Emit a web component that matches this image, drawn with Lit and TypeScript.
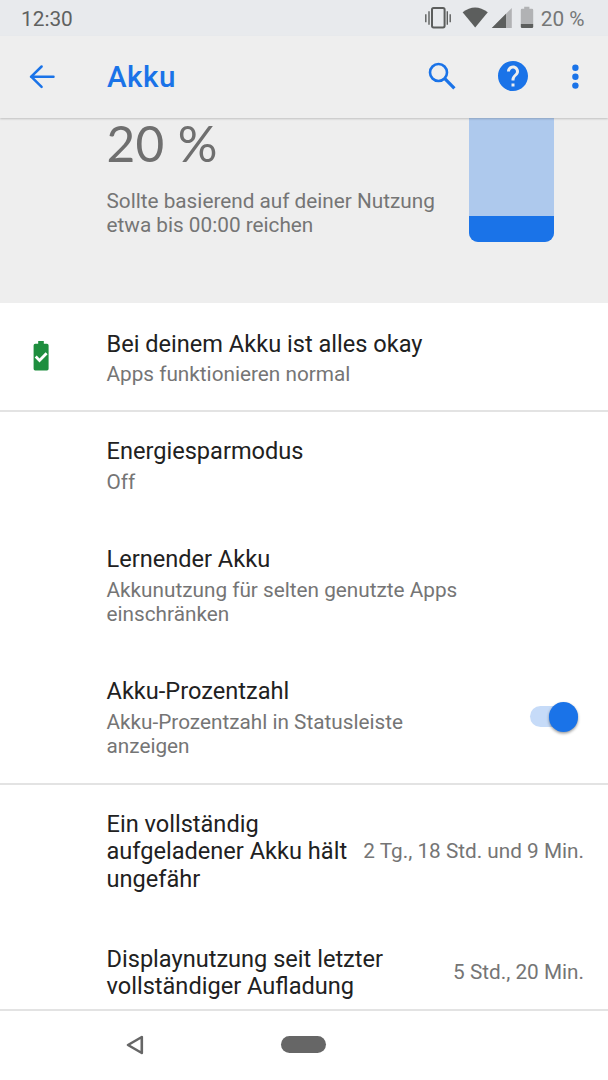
import { LitElement, html, svg, css, nothing } from "lit";
import { customElement, property } from "lit/decorators.js";

const title = css`
  .title {
    font-size: 23.58px;
    line-height: 27.6px;
    color: #212121;
    white-space: pre-line;
  }
  .summary {
    font-size: 20.76px;
    line-height: 24.2px;
    color: #757575;
    white-space: pre-line;
  }
`;

@customElement("status-bar")
class StatusBar extends LitElement {
  static styles = css`
    :host {
      display: flex;
      height: 35.5px;
      box-sizing: border-box;
      padding: 2px 23.5px 0 21px;
      align-items: center;
      justify-content: space-between;
      background: #e8eaed;
      color: #5f6160;
      font-size: 20.8px;
    }
    .icons {
      display: block;
      margin-top: -2px;
    }
    .right {
      display: flex;
      align-items: center;
      gap: 5px;
      color: #757777;
    }
  `;
  render() {
    return html`
      <span>12:30</span>
      <div class="right">
        <svg class="icons" width="112" height="36" viewBox="424 0 112 36">
          <g fill="none" stroke="#5c5e5d">
            <rect x="432" y="8" width="12.6" height="19.4" rx="1.6" stroke-width="2" />
            <path d="M425.8 14.2v8M450.2 14.2v8M429 11.2v13.6M447.3 11.2v13.6" stroke-width="1.4" />
          </g>
          <path d="M462.6 12.2Q475 2.6 487.8 12.2L475.2 27.6Z" fill="#5c5e5d" />
          <path d="M511.8 8v20H491.8Z" fill="#b1b2b4" />
          <path d="M506 13.8V28H491.8Z" fill="#5c5e5d" />
          <path d="M524.2 6.8h5.2v2h2.6q1.2 0 1.2 1.2v14h-12.4V10q0-1.2 1.2-1.2h2.2Z" fill="#b1b2b4" />
          <path d="M520.8 24h12.4v2.8q0 1.2-1.2 1.2h-10q-1.2 0-1.2-1.2Z" fill="#5c5e5d" />
        </svg>
        <span>20 %</span>
      </div>
    `;
  }
}

@customElement("app-bar")
class AppBar extends LitElement {
  static styles = css`
    :host {
      display: flex;
      height: 82.5px;
      align-items: center;
      background: #eeeeee;
      position: relative;
      z-index: 1;
      color: #1a73e8;
      box-shadow: 0 1px 2px rgba(0, 0, 0, 0.2);
      clip-path: inset(0 0 -6px 0);
    }
    svg {
      display: block;
      flex: none;
      margin-top: -1px;
    }
    .back {
      margin-left: 24px;
    }
    .name {
      flex: 1;
      margin-left: 47px;
      font-size: 29.6px;
      font-weight: 500;
      letter-spacing: 0.5px;
    }
    .help {
      margin-left: 35px;
    }
    .more {
      margin: -1px 29.2px 0 40px;
    }
  `;
  render() {
    return html`
      <svg class="back" width="36" height="36" viewBox="0 0 36 36" fill="none" stroke="currentColor" stroke-width="2.5" stroke-linecap="round" stroke-linejoin="round">
        <path d="M29.5 18.7H7M17.6 8.5L7.2 18.7L17.6 28.9" />
      </svg>
      <span class="name">Akku</span>
      <svg width="36" height="36" viewBox="0 0 36 36" fill="none" stroke="currentColor">
        <circle cx="14.5" cy="14.5" r="8.5" stroke-width="2.6" />
        <path d="M20.8 20.7L30.4 30.4" stroke-width="3.2" />
      </svg>
      <svg class="help" width="36" height="36" viewBox="0 0 24 24" fill="currentColor">
        <path d="M12 2C6.48 2 2 6.48 2 12s4.48 10 10 10 10-4.48 10-10S17.52 2 12 2zm1 17h-2v-2h2v2zm2.07-7.75l-.9.92C13.45 12.9 13 13.5 13 15h-2v-.5c0-1.1.45-2.1 1.17-2.83l1.24-1.26c.37-.36.59-.86.59-1.41 0-1.1-.9-2-2-2s-2 .9-2 2H8c0-2.21 1.79-4 4-4s4 1.79 4 4c0 .88-.36 1.68-.93 2.25z" />
      </svg>
      <svg class="more" width="8" height="36" viewBox="0 0 8 36" fill="currentColor">
        <circle cx="4.4" cy="9.8" r="3.2" />
        <circle cx="4.4" cy="18.7" r="3.2" />
        <circle cx="4.4" cy="27.6" r="3.2" />
      </svg>
    `;
  }
}

@customElement("battery-header")
class BatteryHeader extends LitElement {
  static styles = [
    title,
    css`
      :host {
        display: flex;
        height: 184.5px;
        background: #eeeeee;
        justify-content: space-between;
        padding: 0 53.8px 0 106.5px;
      }
      .level {
        font-family: Lato, sans-serif;
        font-size: 49.5px;
        line-height: 60px;
        margin: -5px 0 16px;
        letter-spacing: 0.4px;
        color: #6f6f6f;
        white-space: pre;
      }
      .meter {
        display: flex;
        flex-direction: column;
        justify-content: flex-end;
        width: 85.5px;
        height: 124.3px;
        border-radius: 0 0 9px 9px;
        overflow: hidden;
        background: #aec9ed;
      }
      .fill {
        height: 26.3px;
        background: #1a73e8;
      }
    `,
  ];
  render() {
    return html`
      <div>
        <div class="level">20 %</div>
        <div class="summary">Sollte basierend auf deiner Nutzung<br />etwa bis 00:00 reichen</div>
      </div>
      <div class="meter"><div class="fill"></div></div>
    `;
  }
}

@customElement("pref-row")
class PrefRow extends LitElement {
  @property() heading = "";
  @property() summary = "";
  @property() value = "";
  @property() icon = "";
  @property({ type: Boolean }) toggle = false;
  static styles = [
    title,
    css`
      :host {
        display: flex;
        align-items: center;
        padding: 26px 24px 26px 0;
      }
      .lead {
        width: 106.5px;
        flex: none;
      }
      .lead svg {
        display: block;
        margin: -2px 0 0 33px;
      }
      .body {
        flex: 1;
        min-width: 0;
        margin: 1.3px 0 -1.3px;
      }
      .summary {
        margin-top: 4px;
      }
      .value {
        font-size: 20.76px;
        color: #757575;
        white-space: nowrap;
      }
      .track {
        display: flex;
        align-items: center;
        justify-content: flex-end;
        width: 48px;
        height: 21px;
        margin-right: 6px;
        border-radius: 11px;
        background: #c6dbf8;
      }
      .thumb {
        flex: none;
        width: 29.5px;
        height: 29.5px;
        border-radius: 50%;
        background: #1a73e8;
        box-shadow: 0 1.5px 3px rgba(0, 0, 0, 0.4);
      }
    `,
  ];
  render() {
    return html`
      <div class="lead">
        ${this.icon
          ? html`<svg width="16" height="30" viewBox="0 0 16 30">
              ${svg`<path d="M5.2 0h5.6v2.8h3.2q1.6 0 1.6 1.6v23.4q0 1.6-1.6 1.6H2.2q-1.6 0-1.6-1.6V4.4q0-1.6 1.6-1.6h3Z" fill="#1e8e3e" />
              <path d="M2.7 15.6l3.8 3.8L13.6 12.2" fill="none" stroke="#fff" stroke-width="2.8" />`}
            </svg>`
          : nothing}
      </div>
      <div class="body">
        <div class="title">${this.heading}</div>
        ${this.summary ? html`<div class="summary">${this.summary}</div>` : nothing}
      </div>
      ${this.value ? html`<div class="value">${this.value}</div>` : nothing}
      ${this.toggle ? html`<div class="track"><div class="thumb"></div></div>` : nothing}
    `;
  }
}

@customElement("nav-bar")
class NavBar extends LitElement {
  static styles = css`
    :host {
      display: flex;
      height: 71px;
      box-sizing: border-box;
      border-top: 2px solid #e3e3e3;
      background: #fff;
      align-items: center;
      padding-left: 125px;
      gap: 136px;
    }
    svg {
      display: block;
      margin-top: -2px;
    }
    .home {
      width: 45px;
      height: 17px;
      border-radius: 9px;
      background: #666;
      margin-top: -2px;
    }
  `;
  render() {
    return html`
      <svg width="20" height="22" viewBox="0 0 20 22">
        <path d="M3 11L16.8 3V19Z" fill="none" stroke="#666" stroke-width="2.6" stroke-linejoin="round" />
      </svg>
      <div class="home"></div>
    `;
  }
}

@customElement("app-root")
class AppRoot extends LitElement {
  static styles = css`
    :host {
      display: flex;
      flex-direction: column;
      height: 1080px;
      overflow: hidden;
      background: #fff;
      font-family: Roboto, sans-serif;
    }
    .list {
      flex: 1;
      min-height: 0;
      overflow: hidden;
    }
    .group {
      border-bottom: 2px solid #e3e3e3;
      margin-bottom: -1.3px;
    }
    .tip {
      padding-top: 27px;
      padding-bottom: 25px;
    }
  `;
  render() {
    return html`
      <status-bar></status-bar>
      <app-bar></app-bar>
      <div class="list">
        <battery-header></battery-header>
        <div class="group">
          <pref-row class="tip" icon="ok" heading="Bei deinem Akku ist alles okay" summary="Apps funktionieren normal"></pref-row>
        </div>
        <div class="group">
          <pref-row heading="Energiesparmodus" summary="Off"></pref-row>
          <pref-row heading="Lernender Akku" .summary=${"Akkunutzung für selten genutzte Apps\neinschränken"}></pref-row>
          <pref-row heading="Akku-Prozentzahl" .summary=${"Akku-Prozentzahl in Statusleiste\nanzeigen"} toggle></pref-row>
        </div>
        <pref-row .heading=${"Ein vollständig\naufgeladener Akku hält\nungefähr"} value="2 Tg., 18 Std. und 9 Min."></pref-row>
        <pref-row .heading=${"Displaynutzung seit letzter\nvollständiger Aufladung"} value="5 Std., 20 Min."></pref-row>
      </div>
      <nav-bar></nav-bar>
    `;
  }
}
